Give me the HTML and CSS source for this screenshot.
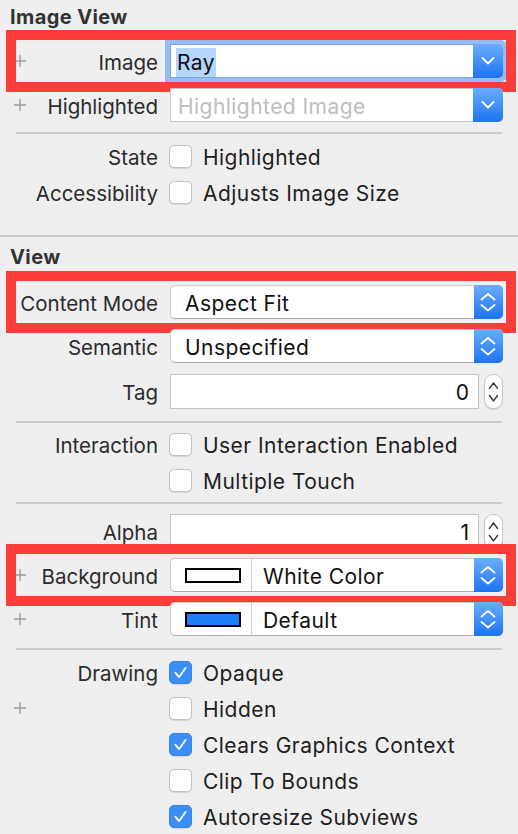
FILE: index.html
```html
<!DOCTYPE html>
<html>
<head>
<meta charset="utf-8">
<link rel="stylesheet" href="styles.css">
</head>
<body>
<div class="inspector">
  <div class="title">Image View</div>

  <div class="row prop marked">
    <div class="label"><svg class="plus" viewBox="0 0 14 14"><path d="M7 1v12M1 7h12"/></svg><span>Image</span></div>
    <div class="combo focused">
      <div class="combo-text"><span class="sel">Ray</span></div>
      <div class="blue-btn"><svg viewBox="0 0 30 34"><polyline points="9.5,14 15,19.5 20.5,14"/></svg></div>
    </div>
  </div>

  <div class="row prop">
    <div class="label"><svg class="plus" viewBox="0 0 14 14"><path d="M7 1v12M1 7h12"/></svg><span>Highlighted</span></div>
    <div class="combo">
      <div class="combo-text placeholder">Highlighted Image</div>
      <div class="blue-btn"><svg viewBox="0 0 30 34"><polyline points="9.5,14 15,19.5 20.5,14"/></svg></div>
    </div>
  </div>

  <div class="sep inset sep-a"></div>

  <div class="row check first-check">
    <div class="label"><span>State</span></div>
    <div class="opt"><span class="cb"></span><span>Highlighted</span></div>
  </div>
  <div class="row check">
    <div class="label"><span>Accessibility</span></div>
    <div class="opt"><span class="cb"></span><span>Adjusts Image Size</span></div>
  </div>

  <div class="sep full"></div>

  <div class="title view-title">View</div>

  <div class="row prop marked after-title">
    <div class="label"><span>Content Mode</span></div>
    <div class="popup">
      <div class="popup-text">Aspect Fit</div>
      <div class="blue-btn"><svg viewBox="0 0 29 34"><polyline points="7.5,14.5 14,9 20.5,14.5"/><polyline points="7.5,20 14,25.5 20.5,20"/></svg></div>
    </div>
  </div>

  <div class="row prop">
    <div class="label"><span>Semantic</span></div>
    <div class="popup">
      <div class="popup-text">Unspecified</div>
      <div class="blue-btn"><svg viewBox="0 0 29 34"><polyline points="7.5,14.5 14,9 20.5,14.5"/><polyline points="7.5,20 14,25.5 20.5,20"/></svg></div>
    </div>
  </div>

  <div class="row prop tag-row">
    <div class="label"><span>Tag</span></div>
    <div class="num">
      <div class="field">0</div>
      <div class="stepper"><svg viewBox="0 0 19 35"><polyline points="5,14 9.5,8 14,14"/><polyline points="5,22 9.5,28 14,22"/></svg></div>
    </div>
  </div>

  <div class="sep inset sep-b"></div>

  <div class="row check after-sep">
    <div class="label"><span>Interaction</span></div>
    <div class="opt"><span class="cb"></span><span>User Interaction Enabled</span></div>
  </div>
  <div class="row check">
    <div class="label"></div>
    <div class="opt"><span class="cb"></span><span>Multiple Touch</span></div>
  </div>

  <div class="sep inset sep-c"></div>

  <div class="row prop">
    <div class="label"><span>Alpha</span></div>
    <div class="num">
      <div class="field">1</div>
      <div class="stepper"><svg viewBox="0 0 19 35"><polyline points="5,14 9.5,8 14,14"/><polyline points="5,22 9.5,28 14,22"/></svg></div>
    </div>
  </div>

  <div class="row prop marked">
    <div class="label"><svg class="plus" viewBox="0 0 14 14"><path d="M7 1v12M1 7h12"/></svg><span>Background</span></div>
    <div class="popup">
      <div class="well"><span class="swatch white"></span></div>
      <div class="popup-text color-name">White Color</div>
      <div class="blue-btn"><svg viewBox="0 0 29 34"><polyline points="7.5,14.5 14,9 20.5,14.5"/><polyline points="7.5,20 14,25.5 20.5,20"/></svg></div>
    </div>
  </div>

  <div class="row prop">
    <div class="label"><svg class="plus" viewBox="0 0 14 14"><path d="M7 1v12M1 7h12"/></svg><span>Tint</span></div>
    <div class="popup">
      <div class="well"><span class="swatch blue"></span></div>
      <div class="popup-text color-name">Default</div>
      <div class="blue-btn"><svg viewBox="0 0 29 34"><polyline points="7.5,14.5 14,9 20.5,14.5"/><polyline points="7.5,20 14,25.5 20.5,20"/></svg></div>
    </div>
  </div>

  <div class="sep inset sep-d"></div>

  <div class="row check after-sep-d">
    <div class="label"><span>Drawing</span></div>
    <div class="opt"><span class="cb on"><svg viewBox="0 0 23 23"><polyline points="6,12 10,16.5 17,6.5"/></svg></span><span>Opaque</span></div>
  </div>
  <div class="row check">
    <div class="label"><svg class="plus" viewBox="0 0 14 14"><path d="M7 1v12M1 7h12"/></svg></div>
    <div class="opt"><span class="cb"></span><span>Hidden</span></div>
  </div>
  <div class="row check">
    <div class="label"></div>
    <div class="opt"><span class="cb on"><svg viewBox="0 0 23 23"><polyline points="6,12 10,16.5 17,6.5"/></svg></span><span>Clears Graphics Context</span></div>
  </div>
  <div class="row check">
    <div class="label"></div>
    <div class="opt"><span class="cb"></span><span>Clip To Bounds</span></div>
  </div>
  <div class="row check">
    <div class="label"></div>
    <div class="opt"><span class="cb on"><svg viewBox="0 0 23 23"><polyline points="6,12 10,16.5 17,6.5"/></svg></span><span>Autoresize Subviews</span></div>
  </div>
</div>
</body>
</html>
```

FILE: styles.css
```css
html, body {
  margin: 0;
  padding: 0;
  background: #efefef;
}

body {
  font-family: Inter, "Noto Sans", sans-serif;
  font-size: 21px;
  color: #222;
  width: 518px;
  height: 834px;
  overflow: hidden;
}

.inspector {
  display: flex;
  flex-direction: column;
}

.title {
  height: 34px;
  line-height: 34px;
  padding-left: 10px;
  font-size: 20px;
  letter-spacing: 0.4px;
  font-weight: 700;
  color: #333;
}

.view-title {
  margin-top: 3px;
}

.row {
  display: grid;
  grid-template-columns: 145px 1fr;
  column-gap: 12px;
  padding: 0 15px 0 13px;
  align-items: center;
  position: relative;
}

.prop {
  height: 34px;
  margin-top: 10px;
}

.tag-row {
  margin-top: 11px;
}

.after-title {
  margin-top: 11px;
}

.check {
  height: 36px;
}

.first-check {
  margin-top: 4px;
}

.after-sep {
  margin-top: 3px;
}

.after-sep-d {
  margin-top: 4px;
}

.marked::after {
  content: "";
  position: absolute;
  left: 6px;
  right: 2px;
  top: -14px;
  bottom: -14px;
  border: 10px solid #fd3d3a;
  pointer-events: none;
}

.label {
  display: flex;
  align-items: center;
  color: #2b2b2b;
  white-space: nowrap;
  padding-top: 2px;
  font-size: 20.5px;
}

.label span {
  margin-left: auto;
}

.plus {
  width: 14px;
  height: 14px;
  flex: none;
  margin-top: -2px;
}

.plus path {
  stroke: #9d9d9d;
  stroke-width: 1.4;
  fill: none;
}

/* combo box */
.combo {
  display: flex;
  height: 34px;
  box-sizing: border-box;
  background: #fff;
  border: 1px solid #c6c6c6;
  border-right: none;
  border-radius: 0 5px 5px 0;
  letter-spacing: 0.45px;
}

.combo.focused {
  border-color: #79a6e4;
  box-shadow: 0 0 0 5px #95bdf1;
}

.combo-text {
  flex: 1;
  padding-left: 5px;
  display: flex;
  align-items: center;
  color: #111;
  padding-top: 2px;
  white-space: nowrap;
  overflow: hidden;
}

.sel {
  background: #b4d6fd;
  padding: 2px 1px;
}

.placeholder {
  color: #bdbdbd;
  padding-left: 7px;
}

.blue-btn {
  width: 29px;
  flex: none;
  background: linear-gradient(#6badfc, #1c74f2);
  border-radius: 0 5px 5px 0;
  margin: -1px 0;
}

.combo .blue-btn {
  width: 30px;
}

.blue-btn svg {
  display: block;
  width: 100%;
  height: 100%;
}

.blue-btn polyline {
  fill: none;
  stroke: #fff;
  stroke-width: 1.8;
  stroke-linecap: round;
  stroke-linejoin: round;
}

/* popup */
.popup {
  display: flex;
  height: 34px;
  box-sizing: border-box;
  background: #fff;
  border: 1px solid #cbcbcb;
  border-bottom-color: #ababab;
  border-right: none;
  border-radius: 5px;
  letter-spacing: 0.45px;
}

.popup-text {
  flex: 1;
  display: flex;
  align-items: center;
  padding-left: 14px;
  padding-top: 2px;
  color: #111;
}

.popup .blue-btn {
  margin: -1px 0;
}

.well {
  width: 80px;
  flex: none;
  display: flex;
  align-items: center;
  justify-content: center;
  border-right: 1px solid #cfcfcf;
}

.swatch {
  width: 56px;
  height: 15px;
  box-sizing: border-box;
  border: 2px solid #000;
  margin-left: 3px;
}

.swatch.white {
  background: #fff;
}

.swatch.blue {
  background: #1d7ff8;
}

.color-name {
  padding-left: 11px;
}

/* numeric field */
.num {
  display: flex;
  gap: 5px;
  height: 35px;
}

.field {
  flex: 1;
  box-sizing: border-box;
  background: #fff;
  border: 1px solid #c4c4c4;
  text-align: right;
  padding-right: 9px;
  display: flex;
  align-items: center;
  justify-content: flex-end;
  padding-top: 2px;
  color: #111;
}

.stepper {
  width: 19px;
  flex: none;
  box-sizing: border-box;
  background: #fff;
  border: 1px solid #c6c6c6;
  border-radius: 9px;
  box-shadow: 0 1px 1px rgba(0,0,0,0.12);
}

.stepper svg {
  display: block;
  width: 100%;
  height: 100%;
}

.stepper polyline {
  fill: none;
  stroke: #333;
  stroke-width: 1.6;
  stroke-linecap: round;
  stroke-linejoin: round;
}

/* checkbox rows */
.opt {
  display: flex;
  align-items: center;
  gap: 11px;
  margin-left: -1px;
  color: #1e1e1e;
  white-space: nowrap;
  letter-spacing: 0.45px;
}

.opt > span:last-child {
  padding-top: 2px;
}

.cb {
  width: 23px;
  height: 23px;
  box-sizing: border-box;
  border-radius: 5px;
  background: #fff;
  border: 1px solid #c2c2c2;
  box-shadow: 0 0.5px 1px rgba(0,0,0,0.1);
  flex: none;
}

.cb.on {
  background: #3b8ef6;
  border-color: #3585ee;
}

.cb svg {
  display: block;
  width: 21px;
  height: 21px;
}

.cb polyline {
  fill: none;
  stroke: #fff;
  stroke-width: 2;
  stroke-linecap: round;
  stroke-linejoin: round;
}

/* separators */
.sep {
  height: 2px;
  background: #cccccc;
  flex: none;
}

.sep.inset {
  margin-left: 16px;
  margin-right: 16px;
}

.sep-a {
  margin-top: 10px;
}

.sep.full {
  margin-top: 25px;
}

.sep-b {
  margin-top: 13px;
}

.sep-c {
  margin-top: 4px;
}

.sep-d {
  margin-top: 12px;
}
```
